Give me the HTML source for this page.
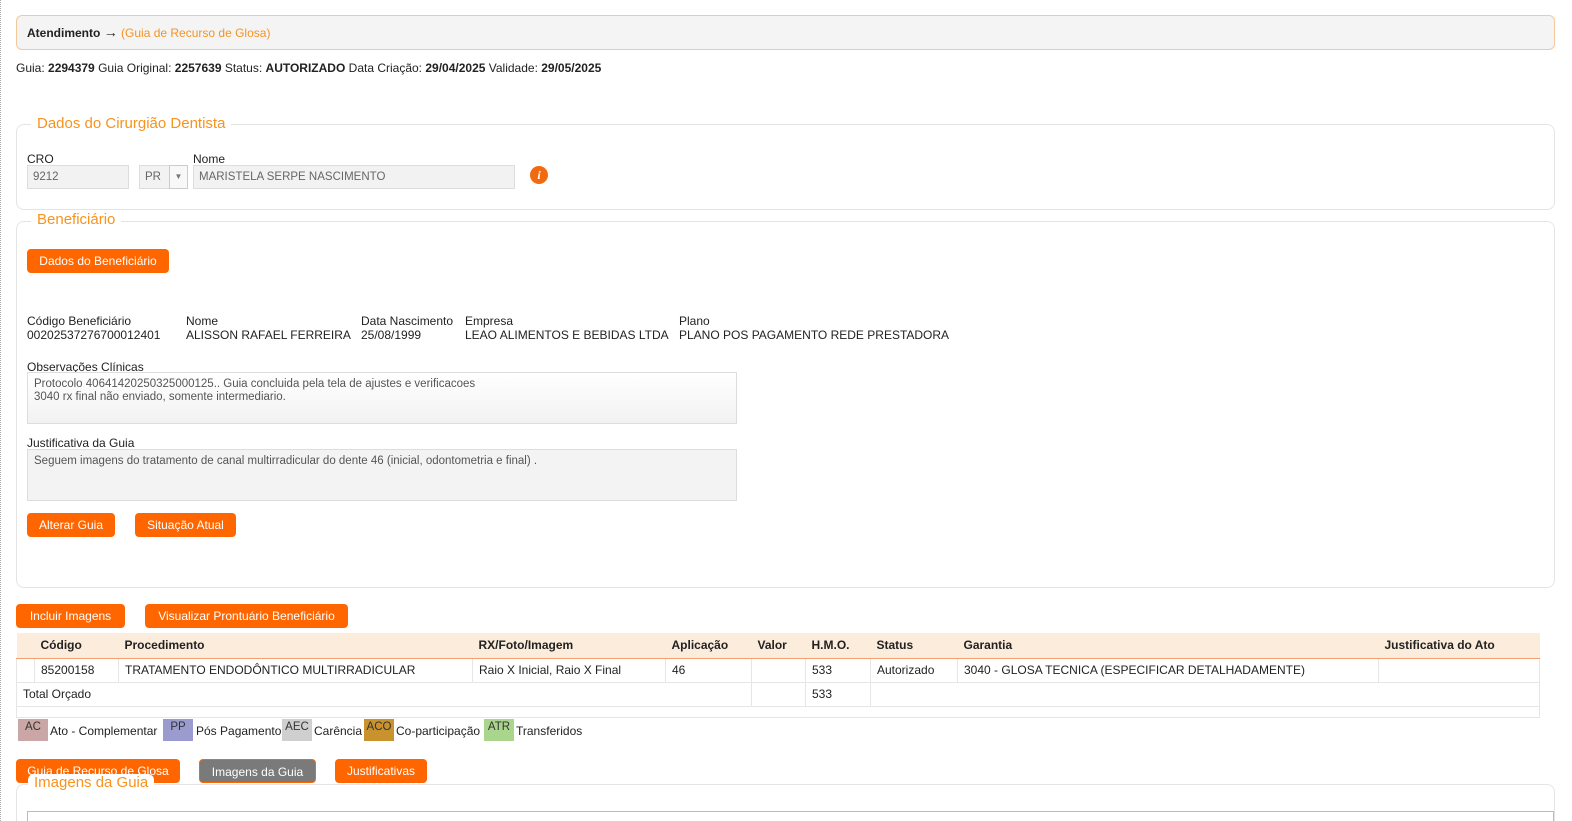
<!DOCTYPE html>
<html><head><meta charset="utf-8"><style>
*{box-sizing:border-box;margin:0;padding:0}
html,body{width:1572px;height:821px;overflow:hidden}
body{background:#fff;font-family:"Liberation Sans",Arial,sans-serif;font-size:12px;color:#222;position:relative}
.a{position:absolute;white-space:nowrap}
.bl{position:absolute;left:0;top:0;width:1px;height:821px;border-left:1px dotted #aaa}
.hdr{left:16px;top:15px;width:1539px;height:35px;background:#f4f4f4;border:1px solid #f3c99c;border-radius:6px}
.fs{position:absolute;border:1px solid #e4e4e4;border-radius:8px}
.lg{position:absolute;background:#fff;color:#f7931e;font-size:15px;padding:0 6px}
.inp{position:absolute;height:24px;background:#f2f2f2;border:1px solid #ddd;color:#666;padding:5px 5px;font-size:11.5px}
.btn{position:absolute;height:24px;background:#ff6600;color:#fff;border-radius:4px;font-size:12px;text-align:center;line-height:24px;white-space:nowrap}
.ta{position:absolute;background:#f3f3f3;border:1px solid #ddd;color:#555;padding:5px 6px;font-size:11.5px;line-height:13px}
table{position:absolute;left:16px;top:633px;width:1524px;border-collapse:collapse;font-size:12px}
th{background:#fbecdc;text-align:left;height:25px;padding:0 6px;border-bottom:1px solid #f0a070;font-weight:bold}
td{height:24px;padding:0 6px;border:1px solid #e6e6e6}
.lgd{position:absolute;top:719px;height:22px;width:30px;padding:2px 0;text-align:center;font-size:11.5px;color:#333}
</style></head><body>
<div class="bl"></div>
<div class="a hdr"></div>
<div class="a" style="left:27px;top:26px"><b>Atendimento</b> <span style="font-size:14px;line-height:12px">→</span> <span style="color:#f7931e">(Guia de Recurso de Glosa)</span></div>
<div class="a" style="left:16px;top:61px">Guia: <b>2294379</b> Guia Original: <b>2257639</b> Status: <b>AUTORIZADO</b> Data Criação: <b>29/04/2025</b> Validade: <b>29/05/2025</b></div>

<div class="fs" style="left:16px;top:124px;width:1539px;height:86px"></div>
<div class="lg" style="left:31px;top:115px">Dados do Cirurgião Dentista</div>
<div class="a" style="left:27px;top:152px">CRO</div>
<div class="a" style="left:193px;top:152px">Nome</div>
<div class="inp" style="left:27px;top:165px;width:102px">9212</div>
<div class="inp" style="left:139px;top:165px;width:49px">PR</div>
<div class="a" style="left:169px;top:165px;width:19px;height:24px;border:1px solid #ccc;background:#f8f8f8;font-size:8px;color:#777;text-align:center;line-height:22px">▼</div>
<div class="inp" style="left:193px;top:165px;width:322px">MARISTELA SERPE NASCIMENTO</div>
<div class="a" style="left:530px;top:166px;width:18px;height:18px;border-radius:50%;background:#f26a0f;color:#fff;font:italic bold 12px 'Liberation Serif',serif;text-align:center;line-height:18px">i</div>

<div class="fs" style="left:16px;top:221px;width:1539px;height:367px"></div>
<div class="lg" style="left:31px;top:211px">Beneficiário</div>
<div class="btn" style="left:27px;top:249px;width:142px">Dados do Beneficiário</div>
<div class="a" style="left:27px;top:314px">Código Beneficiário<br>00202537276700012401</div>
<div class="a" style="left:186px;top:314px">Nome<br>ALISSON RAFAEL FERREIRA</div>
<div class="a" style="left:361px;top:314px">Data Nascimento<br>25/08/1999</div>
<div class="a" style="left:465px;top:314px">Empresa<br>LEAO ALIMENTOS E BEBIDAS LTDA</div>
<div class="a" style="left:679px;top:314px">Plano<br>PLANO POS PAGAMENTO REDE PRESTADORA</div>
<div class="a" style="left:27px;top:360px">Observações Clínicas</div>
<div class="ta" style="left:27px;top:372px;width:710px;height:52px;background:linear-gradient(#fff,#f2f2f2)">Protocolo 40641420250325000125.. Guia concluida pela tela de ajustes e verificacoes<br>3040 rx final não enviado, somente intermediario.</div>
<div class="a" style="left:27px;top:436px">Justificativa da Guia</div>
<div class="ta" style="left:27px;top:449px;width:710px;height:52px">Seguem imagens do tratamento de canal multirradicular do dente 46 (inicial, odontometria e final) .</div>
<div class="btn" style="left:27px;top:513px;width:88px">Alterar Guia</div>
<div class="btn" style="left:135px;top:513px;width:101px">Situação Atual</div>

<div class="btn" style="left:16px;top:604px;width:109px">Incluir Imagens</div>
<div class="btn" style="left:145px;top:604px;width:203px">Visualizar Prontuário Beneficiário</div>

<table>
<tr><th style="width:18px;padding:0"></th><th style="width:84px">Código</th><th style="width:354px">Procedimento</th><th style="width:193px">RX/Foto/Imagem</th><th style="width:86px">Aplicação</th><th style="width:54px">Valor</th><th style="width:65px">H.M.O.</th><th style="width:87px">Status</th><th style="width:421px">Garantia</th><th>Justificativa do Ato</th></tr>
<tr><td style="padding:0"></td><td>85200158</td><td>TRATAMENTO ENDODÔNTICO MULTIRRADICULAR</td><td>Raio X Inicial, Raio X Final</td><td>46</td><td></td><td>533</td><td>Autorizado</td><td>3040 - GLOSA TECNICA (ESPECIFICAR DETALHADAMENTE)</td><td></td></tr>
<tr><td colspan="5" style="border-right:1px solid #e6e6e6">Total Orçado</td><td></td><td>533</td><td colspan="3"></td></tr>
<tr><td colspan="10" style="height:11px"></td></tr>
</table>

<div class="lgd" style="left:18px;background:#caa6a6">AC</div><div class="a" style="left:50px;top:724px">Ato - Complementar</div>
<div class="lgd" style="left:163px;background:#9b9bd0">PP</div><div class="a" style="left:196px;top:724px">Pós Pagamento</div>
<div class="lgd" style="left:282px;background:#cfcfcf">AEC</div><div class="a" style="left:314px;top:724px">Carência</div>
<div class="lgd" style="left:364px;background:#c8922e">ACO</div><div class="a" style="left:396px;top:724px">Co-participação</div>
<div class="lgd" style="left:484px;background:#a9d68c">ATR</div><div class="a" style="left:516px;top:724px">Transferidos</div>

<div class="btn" style="left:16px;top:759px;width:164px">Guia de Recurso de Glosa</div>
<div class="btn" style="left:199px;top:759px;width:117px;background:#7a7a7a;border:1px solid #ff6600">Imagens da Guia</div>
<div class="btn" style="left:335px;top:759px;width:92px">Justificativas</div>
<div class="fs" style="left:16px;top:784px;width:1539px;height:60px"></div>
<div class="lg" style="left:28px;top:774px;border-radius:6px">Imagens da Guia</div>
<div class="a" style="left:27px;top:811px;width:1527px;height:20px;border:1px solid #bbb"></div>
</body></html>
